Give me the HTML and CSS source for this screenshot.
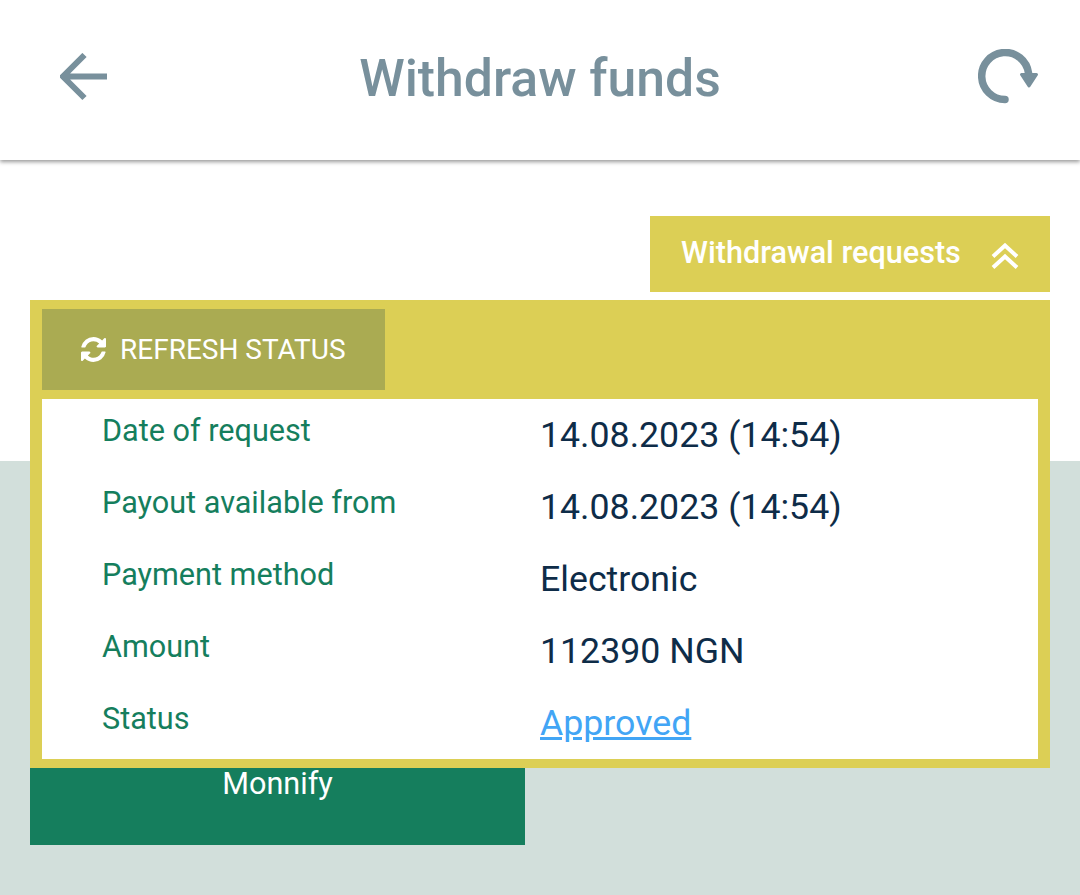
FILE: index.html
```html
<!DOCTYPE html>
<html lang="en">
<head>
    <meta charset="UTF-8">
    <meta name="viewport" content="width=device-width, initial-scale=1.0">
    <title>Withdraw funds</title>
    <link rel="stylesheet" href="styles.css">
</head>
<body>
    <header class="topbar">
        <svg class="back-icon" viewBox="0 0 48 48" width="48" height="48" aria-hidden="true">
            <path d="M47 23.500H3M24.500 2L3 23.500 24.500 45" fill="none" stroke="#78909c" stroke-width="6"/>
        </svg>
        <h1 class="title">Withdraw funds</h1>
        <svg class="reload-icon" viewBox="0 0 60 56" width="60" height="56" aria-hidden="true">
            <path d="M27 50.500A23.500 23.500 0 1 1 50.500 24" fill="none" stroke="#78909c" stroke-width="7.500" stroke-linecap="round"/>
            <path d="M43.500 25.500H58.500L51 37z" fill="#78909c" stroke="#78909c" stroke-width="3" stroke-linejoin="round"/>
        </svg>
    </header>

    <section class="top">
        <button class="toggle">
            <span>Withdrawal requests</span>
            <svg viewBox="0 0 28 26" width="28" height="26" aria-hidden="true">
                <path d="M2 13.500L14 2.500 26 13.500M2 24.500L14 13.500 26 24.500" fill="none" stroke="#fff" stroke-width="4"/>
            </svg>
        </button>

        <div class="panel">
            <button class="refresh">
                <svg viewBox="0 0 1536 1536" width="25" height="25" aria-hidden="true">
                    <path fill="#fff" d="M1511 928q0 5-1 7-64 268-268 434.500t-478 166.500q-146 0-282.500-55t-243.500-157l-129 129q-19 19-45 19t-45-19-19-45v-448q0-26 19-45t45-19h448q26 0 45 19t19 45-19 45l-137 137q71 66 161 102t187 36q134 0 250-65t186-179q11-17 53-117 8-23 30-23h192q13 0 22.500 9.500t9.500 22.500zm25-800v448q0 26-19 45t-45 19h-448q-26 0-45-19t-19-45 19-45l138-138q-148-137-349-137-134 0-250 65t-186 179q-11 17-53 117-8 23-30 23h-199q-13 0-22.500-9.500t-9.500-22.500v-7q65-268 270-434.500t480-166.500q146 0 284 55.500t245 156.500l130-129q19-19 45-19t45 19 19 45z"/>
                </svg>
                REFRESH STATUS
            </button>
            <div class="details">
                <div class="row"><span class="label">Date of request</span><span class="value">14.08.2023 (14:54)</span></div>
                <div class="row"><span class="label">Payout available from</span><span class="value">14.08.2023 (14:54)</span></div>
                <div class="row"><span class="label">Payment method</span><span class="value">Electronic</span></div>
                <div class="row"><span class="label">Amount</span><span class="value">112390 NGN</span></div>
                <div class="row"><span class="label">Status</span><a class="value link" href="#">Approved</a></div>
            </div>
        </div>
    </section>

    <section class="lower">
        <div class="method">Monnify</div>
    </section>
</body>
</html>
```

FILE: styles.css
```css
*{
    margin: 0;
    padding: 0;
    box-sizing: border-box;
}

html,body{
    width: 100%;
    height: 100%;
}
body{
    display: flex;
    flex-direction: column;
    font-family: Roboto, "Liberation Sans", sans-serif;
    background-color: #d2dfdb;
}
button{
    border: 0;
    font-family: inherit;
    color: #fff;
}

.topbar{
    height: 160px;
    padding: 0 42px 7px 60px;
    display: flex;
    align-items: center;
    justify-content: space-between;
    background-color: #fff;
    box-shadow: 0 2px 4px rgba(0,0,0,.4);
    position: relative;
    z-index: 2;
}
.title{
    margin-top: 3px;
    font-size: 51.7px;
    font-weight: 500;
    color: #78909c;
}
.reload-icon{
    margin-left: 6px;
}

.top{
    position: relative;
    height: 301px;
    padding: 56px 30px 0 0;
    background-color: #fff;
    display: flex;
    justify-content: flex-end;
    align-items: flex-start;
}
.toggle{
    width: 400px;
    height: 76px;
    padding: 0 31px 0 31px;
    display: flex;
    align-items: center;
    justify-content: space-between;
    background-color: #dccf55;
    font-size: 30.6px;
    font-weight: 500;
}
.toggle span{
    margin-bottom: 4px;
}
.toggle svg{
    margin-top: 3px;
}

/* sits over the white and the grey part */
.panel{
    position: absolute;
    left: 30px;
    top: 140px;
    width: 1020px;
    height: 468px;
    padding: 9px 12px;
    background-color: #dccf55;
    z-index: 1;
}
.refresh{
    width: 343px;
    height: 81px;
    display: flex;
    align-items: center;
    gap: 14px;
    padding-left: 39px;
    background-color: #aaab52;
    font-size: 28px;
}
.details{
    margin-top: 9px;
    height: 360px;
    background-color: #fff;
}
.row{
    height: 72px;
    display: flex;
    align-items: center;
    padding-left: 60px;
}
.label{
    width: 438px;
    margin-bottom: 10px;
    font-size: 30.6px;
    color: #157e5d;
}
.value{
    font-size: 35.7px;
    color: #0e2c48;
}
.link{
    color: #42a5f5;
}

.lower{
    flex: 1;
    padding: 307px 30px 0;
}
.method{
    width: 495px;
    height: 77px;
    text-align: center;
    background-color: #157e5d;
    color: #fff;
    font-size: 30.6px;
    line-height: 32px;
}
```
